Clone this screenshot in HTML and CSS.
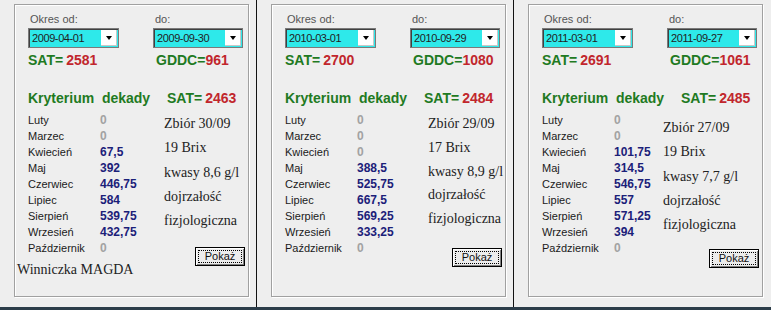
FILE: index.html
```html
<!DOCTYPE html>
<html lang="pl">

<head>
    <meta charset="UTF-8">
    <title>Kryterium dekady</title>
    <link rel="stylesheet" href="styles.css">
</head>

<body>
    <div class="screen">
        <div class="panels">

            <!-- 2009 -->
            <div class="panel">
                <div class="frame">
                    <div class="range">
                        <div class="field">
                            <span class="caption">Okres od:</span>
                            <div class="combo"><span>2009-04-01</span><i class="drop"></i></div>
                        </div>
                        <div class="field">
                            <span class="caption">do:</span>
                            <div class="combo"><span>2009-09-30</span><i class="drop"></i></div>
                        </div>
                    </div>
                    <div class="totals">
                        <div>SAT=<span class="num gap">2581</span></div>
                        <div>GDDC=<span class="num">961</span></div>
                    </div>
                    <div class="crit">
                        <div>Kryterium&nbsp; dekady</div>
                        <div>SAT=<span class="num gap">2463</span></div>
                    </div>
                    <div class="data">
                        <div class="list">
                            <div class="months">
                                <span>Luty</span><b class="zero">0</b>
                                <span>Marzec</span><b class="zero">0</b>
                                <span>Kwiecień</span><b>67,5</b>
                                <span>Maj</span><b>392</b>
                                <span>Czerwiec</span><b>446,75</b>
                                <span>Lipiec</span><b>584</b>
                                <span>Sierpień</span><b>539,75</b>
                                <span>Wrzesień</span><b>432,75</b>
                                <span>Październik</span><b class="zero">0</b>
                            </div>
                            <div class="owner">Winniczka MAGDA</div>
                        </div>
                        <div class="side">
                            <p>Zbiór 30/09</p>
                            <p>19 Brix</p>
                            <p>kwasy 8,6 g/l</p>
                            <p>dojrzałość</p>
                            <p>fizjologiczna</p>
                            <button class="btn"><span>Pokaż</span></button>
                        </div>
                    </div>
                </div>
            </div>

            <!-- 2010 -->
            <div class="panel panel-b">
                <div class="frame">
                    <div class="range">
                        <div class="field">
                            <span class="caption">Okres od:</span>
                            <div class="combo"><span>2010-03-01</span><i class="drop"></i></div>
                        </div>
                        <div class="field">
                            <span class="caption">do:</span>
                            <div class="combo"><span>2010-09-29</span><i class="drop"></i></div>
                        </div>
                    </div>
                    <div class="totals">
                        <div>SAT=<span class="num gap">2700</span></div>
                        <div>GDDC=<span class="num">1080</span></div>
                    </div>
                    <div class="crit">
                        <div>Kryterium&nbsp; dekady</div>
                        <div>SAT=<span class="num gap">2484</span></div>
                    </div>
                    <div class="data">
                        <div class="list">
                            <div class="months">
                                <span>Luty</span><b class="zero">0</b>
                                <span>Marzec</span><b class="zero">0</b>
                                <span>Kwiecień</span><b class="zero">0</b>
                                <span>Maj</span><b>388,5</b>
                                <span>Czerwiec</span><b>525,75</b>
                                <span>Lipiec</span><b>667,5</b>
                                <span>Sierpień</span><b>569,25</b>
                                <span>Wrzesień</span><b>333,25</b>
                                <span>Październik</span><b class="zero">0</b>
                            </div>
                        </div>
                        <div class="side">
                            <p>Zbiór 29/09</p>
                            <p>17 Brix</p>
                            <p>kwasy 8,9 g/l</p>
                            <p>dojrzałość</p>
                            <p>fizjologiczna</p>
                            <button class="btn"><span>Pokaż</span></button>
                        </div>
                    </div>
                </div>
            </div>

            <!-- 2011 -->
            <div class="panel panel-c">
                <div class="frame">
                    <div class="range">
                        <div class="field">
                            <span class="caption">Okres od:</span>
                            <div class="combo"><span>2011-03-01</span><i class="drop"></i></div>
                        </div>
                        <div class="field">
                            <span class="caption">do:</span>
                            <div class="combo"><span>2011-09-27</span><i class="drop"></i></div>
                        </div>
                    </div>
                    <div class="totals">
                        <div>SAT=<span class="num gap">2691</span></div>
                        <div>GDDC=<span class="num">1061</span></div>
                    </div>
                    <div class="crit">
                        <div>Kryterium&nbsp; dekady</div>
                        <div>SAT=<span class="num gap">2485</span></div>
                    </div>
                    <div class="data">
                        <div class="list">
                            <div class="months">
                                <span>Luty</span><b class="zero">0</b>
                                <span>Marzec</span><b class="zero">0</b>
                                <span>Kwiecień</span><b>101,75</b>
                                <span>Maj</span><b>314,5</b>
                                <span>Czerwiec</span><b>546,75</b>
                                <span>Lipiec</span><b>557</b>
                                <span>Sierpień</span><b>571,25</b>
                                <span>Wrzesień</span><b>394</b>
                                <span>Październik</span><b class="zero">0</b>
                            </div>
                        </div>
                        <div class="side">
                            <p>Zbiór 27/09</p>
                            <p>19 Brix</p>
                            <p>kwasy 7,7 g/l</p>
                            <p>dojrzałość</p>
                            <p>fizjologiczna</p>
                            <button class="btn"><span>Pokaż</span></button>
                        </div>
                    </div>
                </div>
            </div>

        </div>
        <div class="taskbar"></div>
    </div>
</body>

</html>
```

FILE: styles.css
```css
/* Page */

* {
    box-sizing: border-box;
}

body {
    margin: 0;
    background: #eeeeee;
    font-family: "Liberation Sans", Arial, sans-serif;
    color: #1a1a1a;
}

.screen {
    width: 771px;
    height: 310px;
    display: flex;
    flex-direction: column;
    overflow: hidden;
}

.panels {
    display: flex;
    height: 307px;
}

.taskbar {
    height: 3px;
    background: #2c3d49;
}
/* Window panels */

.panel {
    width: 257px;
    padding: 4px 0 0 14px;
    border-right: 1px solid #111;
}

.panel:last-child {
    flex: 1;
    border-right: none;
}

.frame {
    width: 235px;
    height: 293px;
    padding: 8px 0 0 13px;
    border: 1px solid #a0a0a0;
    box-shadow: inset 1px 1px 0 #fff, 1px 1px 0 #fff;
}
/* Date range */

.range {
    display: grid;
    grid-template-columns: 91px 90px;
    column-gap: 34px;
}

.caption {
    display: block;
    padding-left: 2px;
    margin-bottom: 2px;
    font-size: 11px;
    line-height: 13px;
    color: #555;
}

.combo {
    display: flex;
    align-items: center;
    height: 20px;
    background: #2ee9ea;
    border: 1px solid #7a7a7a;
    box-shadow: inset 1px 1px 0 #404040;
    padding: 1px 1px 1px 3px;
    font-size: 11px;
    letter-spacing: -0.4px;
    color: #222;
}

.drop {
    display: flex;
    align-items: center;
    justify-content: center;
    width: 16px;
    height: 16px;
    margin-left: auto;
    background: #fff;
    box-shadow: inset -1px -1px 0 #c8c8c8;
}

.drop::after {
    content: "";
    border-left: 3.5px solid transparent;
    border-right: 3.5px solid transparent;
    border-top: 4px solid #000;
}
/* Sums */

.totals,
.crit {
    display: grid;
    font-size: 14px;
    line-height: 17px;
    font-weight: bold;
    color: #1f7a22;
}

.totals {
    grid-template-columns: 128px auto;
    margin-top: 4px;
}

.crit {
    grid-template-columns: 139px auto;
    margin-top: 21px;
}

.num {
    color: #c1262c;
}

.gap {
    margin-left: 3px;
}
/* Months and notes */

.data {
    display: grid;
    grid-template-columns: 136px 1fr;
    margin-top: 5px;
}

.months {
    display: grid;
    grid-template-columns: 72px auto;
    grid-auto-rows: 16px;
    font-size: 11px;
    line-height: 16px;
}

.months b {
    font-size: 12px;
    color: #1b2079;
}

.months b.zero {
    color: #a2a2a2;
}

.owner {
    margin: 6px 0 0 -11px;
    font-family: "Liberation Serif", "Times New Roman", serif;
    font-size: 14px;
    line-height: 16px;
    color: #222;
}

.side {
    display: flex;
    flex-direction: column;
    align-items: flex-start;
    font-family: "Liberation Serif", "Times New Roman", serif;
    font-size: 14px;
    line-height: 24.3px;
    color: #222;
}

.side p {
    margin: 0;
}
/* Button */

.btn {
    display: flex;
    align-self: flex-end;
    width: 50px;
    height: 19px;
    margin: 14px 3px 0 0;
    padding: 2px;
    background: #ececec;
    border: 1px solid #000;
    box-shadow: inset 1px 1px 0 #fff, inset -1px -1px 0 #808080;
    font-family: "Liberation Sans", Arial, sans-serif;
    font-size: 11px;
    color: #111;
}

.btn span {
    flex: 1;
    border: 1px dotted #000;
    line-height: 11px;
    text-align: center;
}
/* Per-panel offsets */

.panel-b .data {
    grid-template-columns: 143px 1fr;
}

.panel-b .side {
    line-height: 23.8px;
}

.panel-b .btn {
    margin-top: 17px;
}

.panel-c .data {
    grid-template-columns: 121px 1fr;
}

.panel-c .side {
    padding-top: 4px;
}

.panel-c .btn {
    margin-top: 12px;
}
```
